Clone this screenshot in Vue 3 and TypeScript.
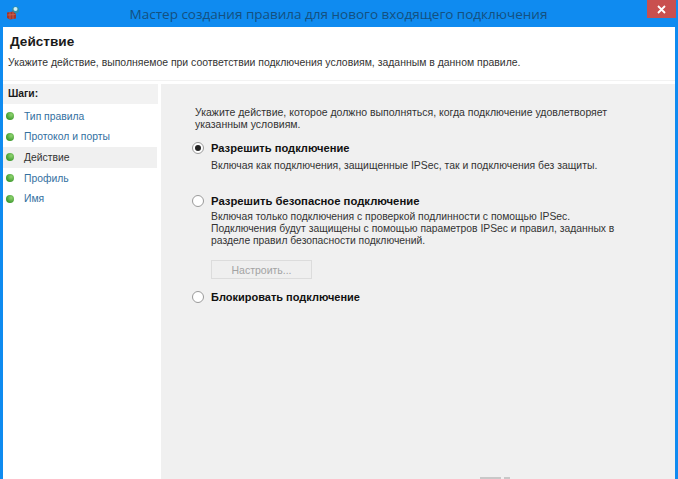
<script setup lang="ts">
interface Step { label: string; active?: boolean }
const steps: Step[] = [
  { label: 'Тип правила' },
  { label: 'Протокол и порты' },
  { label: 'Действие', active: true },
  { label: 'Профиль' },
  { label: 'Имя' },
]
</script>

<template>
  <div class="window">
    <header class="titlebar">
      <svg class="appicon" width="14" height="14" viewBox="0 0 14 14">
        <circle cx="9.500" cy="4" r="3.500" fill="#2f8fa8" />
        <circle cx="9.500" cy="3" r="2" fill="#cfeef2" />
        <path d="M1 6.500L7 5.500L10 8V12.500L4 13.500L1 12z" fill="#a3362b" />
        <path d="M1.500 9l8-0.500M4 6v7M7 6v7" stroke="#c96a55" stroke-width="0.800" />
      </svg>
      <span class="title">Мастер создания правила для нового входящего подключения</span>
      <button class="close" type="button">
        <svg width="9" height="9" viewBox="0 0 9 9"><path d="M1 1l7 7M8 1L1 8" stroke="#fff" stroke-width="1.800" /></svg>
      </button>
    </header>
    <div class="client">
      <section class="head">
        <h1>Действие</h1>
        <p>Укажите действие, выполняемое при соответствии подключения условиям, заданным в данном правиле.</p>
      </section>
      <div class="main">
        <aside class="steps">
          <div class="steps-title">Шаги:</div>
          <ul>
            <li v-for="s in steps" :key="s.label" :class="{ active: s.active }">
              <i class="dot"></i><span>{{ s.label }}</span>
            </li>
          </ul>
        </aside>
        <main class="content">
          <p class="intro">Укажите действие, которое должно выполняться, когда подключение удовлетворяет<br>указанным условиям.</p>
          <div class="opt first">
            <i class="radio on"></i>
            <div class="opt-body">
              <div class="opt-title">Разрешить подключение</div>
              <p>Включая как подключения, защищенные IPSec, так и подключения без защиты.</p>
            </div>
          </div>
          <div class="opt second">
            <i class="radio"></i>
            <div class="opt-body">
              <div class="opt-title">Разрешить безопасное подключение</div>
              <p>Включая только подключения с проверкой подлинности с помощью IPSec.<br>Подключения будут защищены с помощью параметров IPSec и правил, заданных в<br>разделе правил безопасности подключений.</p>
              <button class="custom" type="button" disabled>Настроить...</button>
            </div>
          </div>
          <div class="opt third">
            <i class="radio"></i>
            <div class="opt-body">
              <div class="opt-title">Блокировать подключение</div>
            </div>
          </div>
          <i class="scrap"></i>
        </main>
      </div>
    </div>
  </div>
</template>

<style>
html, body { margin: 0; padding: 0; }
</style>

<style scoped>
.window {
  width: 678px;
  height: 479px;
  display: flex;
  flex-direction: column;
  background: #0f8bf0;
  font-family: "Liberation Sans", Arial, sans-serif;
  overflow: hidden;
  color: #2b2b2b;
}
.titlebar {
  height: 27px;
  flex: none;
  position: relative;
  display: flex;
  align-items: center;
  justify-content: center;
}
.appicon { position: absolute; left: 6px; top: 6px; }
.title {
  font-family: "Open Sans", sans-serif;
  font-size: 13.500px;
  color: #14507f;
  margin-left: -1px;
  white-space: nowrap;
}
.close {
  position: absolute;
  right: 2px;
  top: 0;
  width: 29px;
  height: 18px;
  border: 0;
  padding: 0;
  background: #c9504f;
  display: flex;
  align-items: center;
  justify-content: center;
}
.client {
  flex: 1;
  margin: 0 3px;
  background: #fff;
  display: flex;
  flex-direction: column;
  min-height: 0;
}
.head {
  height: 54px;
  flex: none;
  box-sizing: border-box;
  padding: 6px 0 0 5px;
  border-bottom: 1px solid #f2f2f2;
}
.head h1 {
  margin: 0 0 0 2px;
  font-size: 13.600px;
  line-height: 17px;
  font-weight: 700;
  color: #1a1a1a;
}
.head p {
  margin: 6px 0 0;
  font-size: 10.440px;
  line-height: 14px;
  color: #333;
  white-space: nowrap;
}
.main { flex: 1; display: flex; min-height: 0; margin-top: 3px; }
.steps { width: 157px; flex: none; margin-right: 1px; }
.steps-title {
  height: 20px;
  width: 155px;
  background: #f2f2f2;
  box-sizing: border-box;
  padding-left: 5px;
  font-size: 10.300px;
  font-weight: 700;
  line-height: 20px;
  color: #1a1a1a;
}
.steps ul { list-style: none; margin: 0; padding: 2px 0 0; }
.steps li {
  height: 20.600px;
  width: 154px;
  display: flex;
  align-items: center;
  font-size: 10.350px;
  color: #33709f;
}
.steps li.active { background: #f0f0f0; color: #333; }
.dot {
  width: 8px;
  height: 8px;
  margin: 0 10px 0 3px;
  border-radius: 50%;
  background: radial-gradient(circle at 65% 35%, #8fd36f, #3f9a2f 70%);
}
.content {
  flex: 1;
  background: #f0f0f0;
  position: relative;
  box-sizing: border-box;
  padding: 22px 0 0 31px;
  font-size: 10.350px;
  color: #333;
}
.intro { margin: 0 0 0 3px; font-size: 10.500px; line-height: 12px; white-space: nowrap; }
.opt { display: flex; }
.opt p { margin: 0; line-height: 12px; white-space: nowrap; }
.first { margin-top: 12px; }
.first p { font-size: 10.430px; }
.second { margin-top: 23px; }
.third { margin-top: 12px; }
.first .opt-title { margin-bottom: 5px; }
.second .opt-title { margin-bottom: 3px; font-size: 11.300px; }
.third .opt-title { font-size: 11px; }
.radio {
  flex: none;
  width: 10px;
  height: 10px;
  margin: 0 7px 0 0;
  border: 1px solid #9a9a9a;
  border-radius: 50%;
  background: #fff;
  position: relative;
}
.radio.on::after {
  content: "";
  position: absolute;
  left: 2px;
  top: 2px;
  width: 6px;
  height: 6px;
  border-radius: 50%;
  background: #222;
}
.opt-title { font-weight: 700; font-size: 11.150px; line-height: 13px; color: #111; }
.custom {
  display: block;
  margin-top: 13px;
  width: 101px;
  height: 19px;
  box-sizing: border-box;
  border: 1px solid #dcdcdc;
  background: #efefef;
  color: #a3a3a3;
  font: 10.500px "Liberation Sans", Arial, sans-serif;
  padding: 0;
}
.scrap {
  position: absolute;
  left: 319px;
  bottom: 0;
  width: 30px;
  height: 2px;
  background: linear-gradient(90deg, #c8c8c8 0 70%, transparent 70% 80%, #c8c8c8 80%);
}
</style>
